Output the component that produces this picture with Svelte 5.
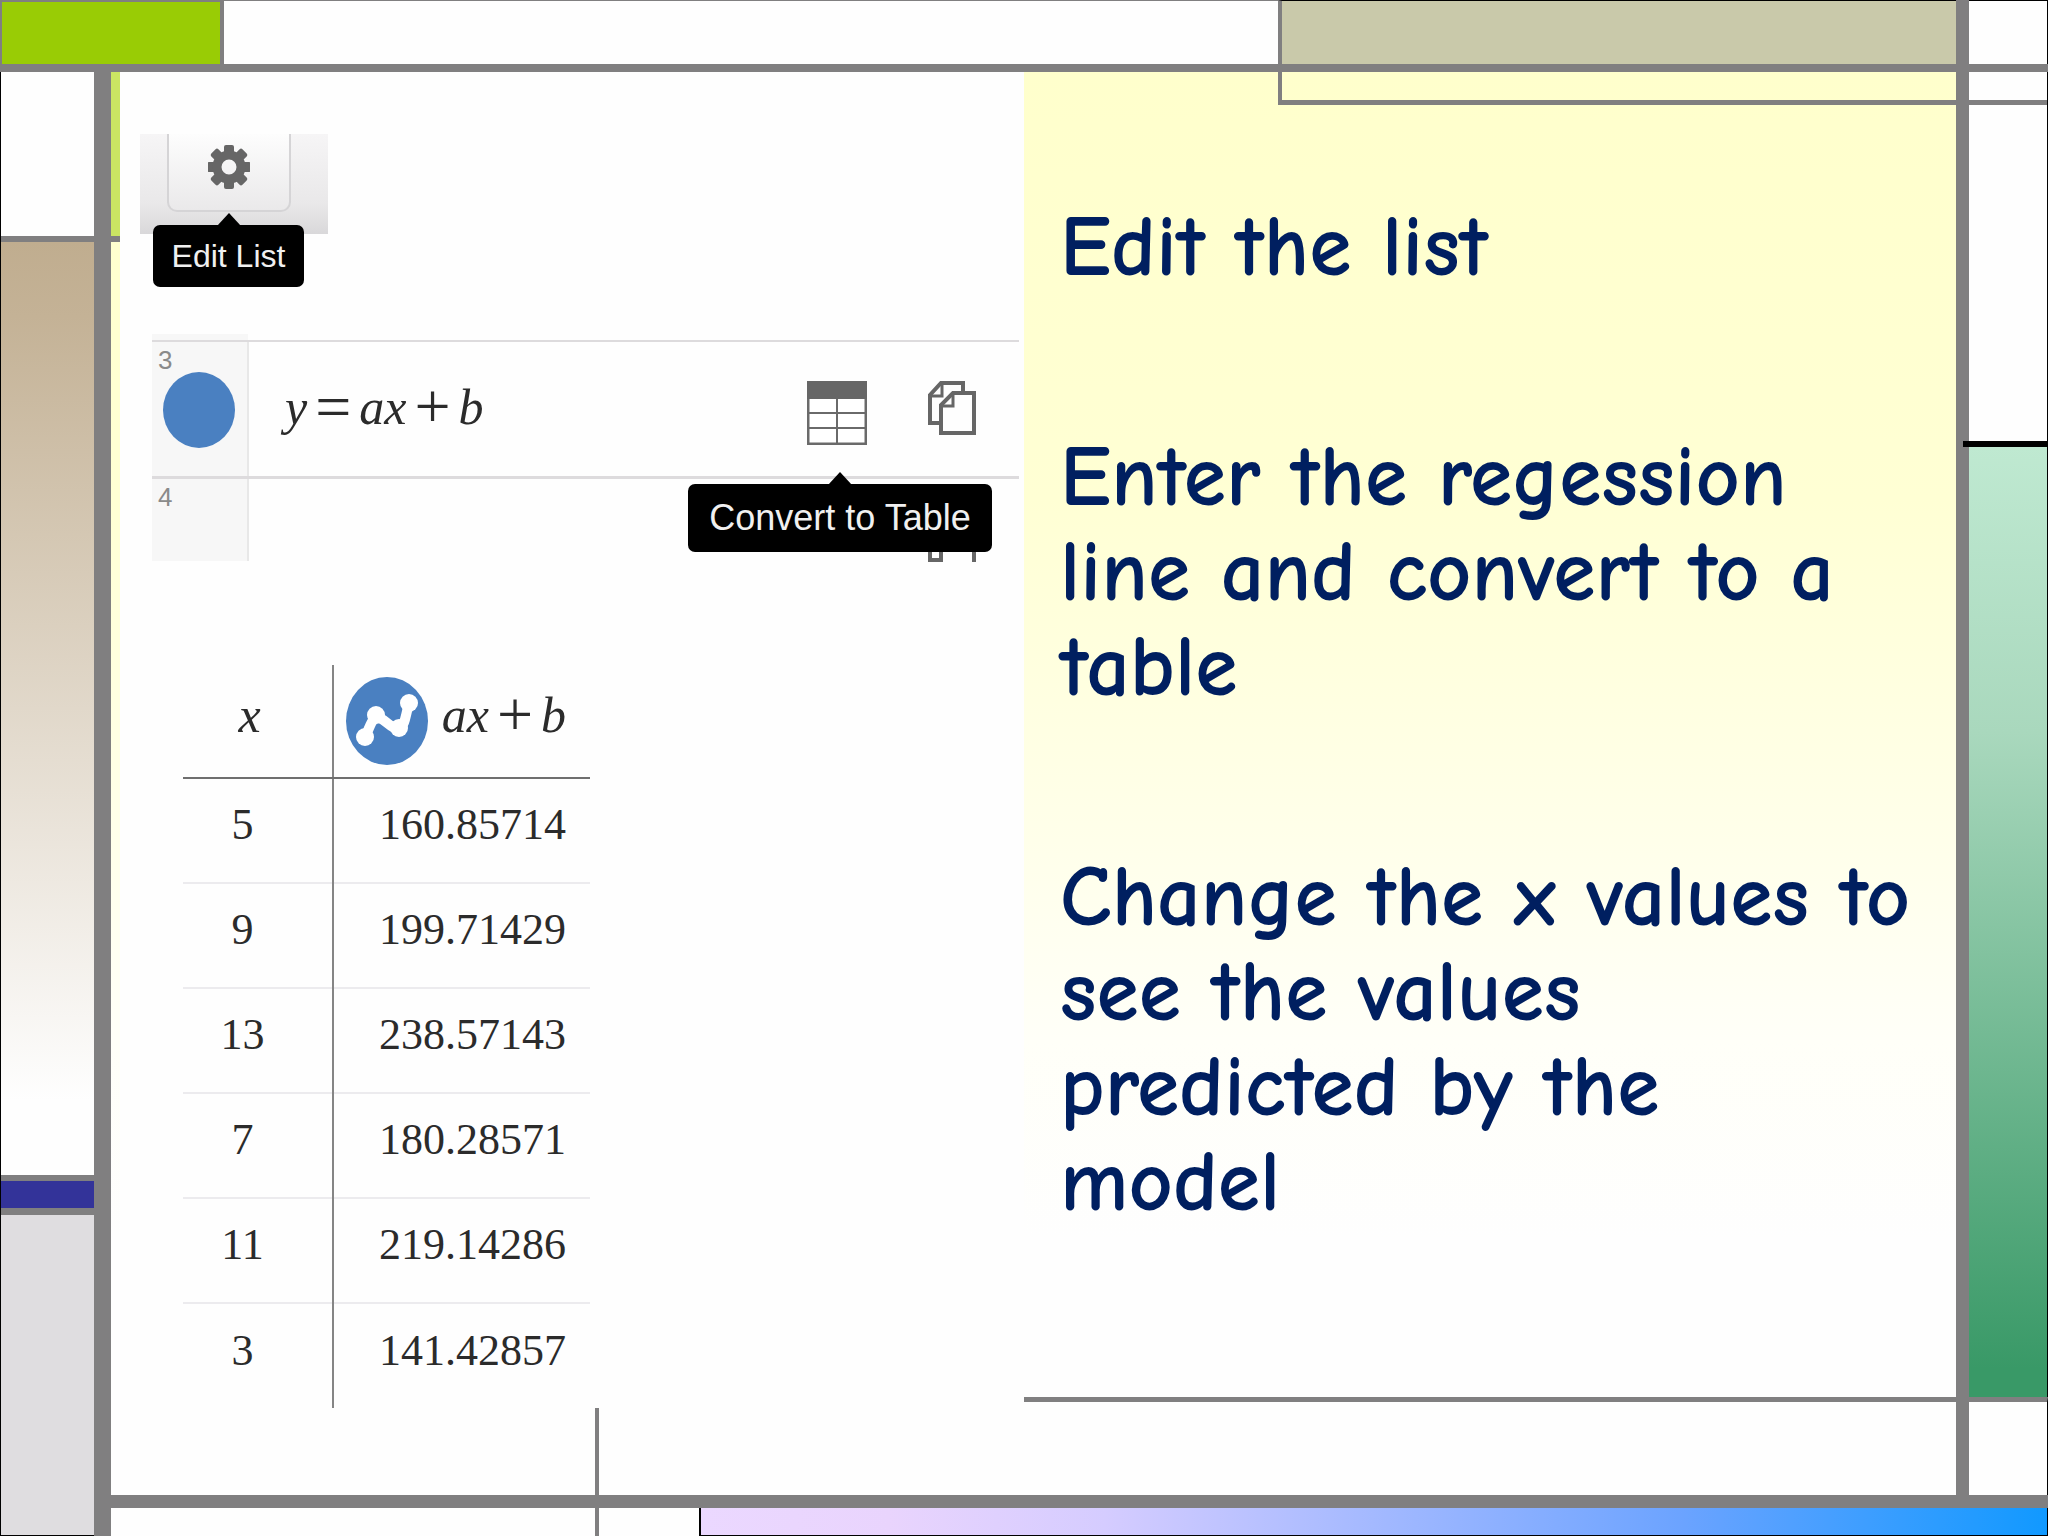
<script>
  const rows = [
    ['5', '160.85714'],
    ['9', '199.71429'],
    ['13', '238.57143'],
    ['7', '180.28571'],
    ['11', '219.14286'],
    ['3', '141.42857'],
  ];

  const steps = [
    ['Edit the list'],
    ['Enter the regession', 'line and convert to a', 'table'],
    ['Change the x values to', 'see the values', 'predicted by the', 'model'],
  ];

  const teeth = [0, 45, 90, 135, 180, 225, 270, 315];
</script>

{#snippet copyIcon()}
  <svg width="48" height="54" viewBox="0 0 48 54" fill="none" stroke="#666" stroke-width="4" aria-hidden="true">
    <path d="M11 42H2V14L13 2H35V11" />
    <path d="M2 15H14V3" stroke-width="3" />
    <path d="M25 12H46V52H13V24Z" />
    <path d="M13 25H25V12" stroke-width="3" />
  </svg>
{/snippet}

<div class="slide">
  <div class="top">
    <div class="lime"></div>
    <div class="blank"></div>
    <div class="khaki"></div>
  </div>
  <div class="top-right"></div>
  <div class="bar-top"></div>
  <div class="bar-left"></div>
  <div class="bar-right"></div>
  <div class="bar-bottom"></div>

  <div class="rail-left">
    <div class="pane"></div>
    <div class="tan"></div>
    <div class="indigo"></div>
    <div class="silver"></div>
  </div>

  <main>
    <div class="strip"><div class="strip-lime"></div></div>
    <section class="demo">
      <div class="toolbar">
        <button class="gear" aria-label="Edit List">
          <svg width="42" height="44" viewBox="-21 -22 42 44" aria-hidden="true">
            <g fill="#666">
              {#each teeth as angle}
                <rect x="-5" y="-22" width="10" height="12" rx="2" transform="rotate({angle})" />
              {/each}
            </g>
            <circle r="12" fill="none" stroke="#666" stroke-width="9" />
          </svg>
        </button>
        <div class="tip tip-edit" role="tooltip">Edit List</div>
      </div>

      <div class="expressions">
        <div class="expr">
          <div class="gutter">
            <span class="index">3</span>
            <button class="dot" aria-label="Toggle curve"></button>
          </div>
          <div class="formula"><i>y</i><b>=</b><i>ax</i><b>+</b><i>b</i></div>
          <div class="actions">
            <button aria-label="Convert to Table">
              <svg width="60" height="64" viewBox="0 0 60 64" aria-hidden="true">
                <rect x="1" y="1" width="58" height="62" fill="#fff" stroke="#6a6a6a" stroke-width="3" />
                <rect width="60" height="18" fill="#666" />
                <path d="M30 18V63M2 32H58M2 47H58" stroke="#6a6a6a" stroke-width="2" />
              </svg>
            </button>
            <button class="copy" aria-label="Duplicate">{@render copyIcon()}</button>
          </div>
          <div class="tip tip-table" role="tooltip">Convert to Table</div>
        </div>
        <div class="expr next">
          <div class="gutter"><span class="index">4</span></div>
          <div class="clip">{@render copyIcon()}</div>
        </div>
      </div>

      <table>
        <thead>
          <tr>
            <th class="xhead"><i>x</i></th>
            <th>
              <div class="head">
                <button class="plot" aria-label="Plot points">
                  <svg width="82" height="88" viewBox="0 0 82 88" aria-hidden="true">
                    <ellipse cx="41" cy="44" rx="41" ry="44" fill="#4a80c1" />
                    <path d="M19 61C25 46 27 39 34 41C42 45 46 53 54 51C60 46 59 39 63 27" fill="none" stroke="#fff" stroke-width="10" />
                    <g fill="#fff">
                      <circle cx="19" cy="60" r="9" />
                      <circle cx="30" cy="38" r="9" />
                      <circle cx="53" cy="51" r="9" />
                      <circle cx="63" cy="26" r="9" />
                    </g>
                  </svg>
                </button>
                <div class="formula"><i>ax</i><b>+</b><i>b</i></div>
              </div>
            </th>
          </tr>
        </thead>
        <tbody>
          {#each rows as [x, value]}
            <tr><td class="xval">{x}</td><td>{value}</td></tr>
          {/each}
        </tbody>
      </table>
      <div class="stem"></div>
    </section>

    <section class="notes">
      <div class="bracket"></div>
      <div class="steps">
        {#each steps as lines}
          <p>{#each lines as line}<span>{line} </span>{/each}</p>
        {/each}
      </div>
      <div class="base"></div>
    </section>
  </main>

  <div class="rail-right">
    <div class="r1"></div>
    <div class="r2"></div>
    <div class="r3"></div>
    <div class="green"></div>
    <div class="r4"></div>
  </div>

  <div class="bottom">
    <div class="b1"></div>
    <div class="b2"></div>
    <div class="sky"></div>
  </div>
</div>

<style>
  :global(body) { background: #fefefe; }
  * { box-sizing: border-box; }
  button { border: 0; padding: 0; background: none; display: block; cursor: pointer; }
  svg { display: block; }

  .slide {
    --line: #807f80;
    min-height: 100vh;
    display: grid;
    grid-template-columns: 94px 17px 1fr 13px 79px;
    grid-template-rows: 64px 8px 1fr 13px 28px;
    background: #fefefe;
  }
  .top {
    grid-area: 1 / 1 / 2 / 4;
    display: grid;
    grid-template-columns: 224px 1fr 678px;
  }
  .lime {
    background: #99cc05;
    border: 2px solid var(--line);
    border-width: 2px 4px 0 2px;
  }
  .blank { border-top: 1px solid var(--line); }
  .khaki { background: #c9c9aa; border-left: 4px solid var(--line); border-top: 1px solid #000; }
  .top-right { grid-area: 1 / 5; border-top: 1px solid #000; border-right: 1px solid #000; }
  .bar-top { grid-area: 2 / 1 / 3 / 6; background: var(--line); z-index: 1; }
  .bar-left { grid-area: 3 / 2 / 6 / 3; background: var(--line); }
  .bar-right { grid-area: 1 / 4 / 5 / 5; background: var(--line); }
  .bar-bottom { grid-area: 4 / 3 / 5 / 6; background: var(--line); }

  .rail-left {
    grid-area: 3 / 1 / 6 / 2;
    display: flex;
    flex-direction: column;
    border-left: 1px solid #000;
    border-bottom: 1px solid #000;
  }
  .pane { height: 170px; border-bottom: 6px solid var(--line); }
  .tan { flex: 1; background: linear-gradient(#c0ad8f, #c4b296 8%, #fefefe 92%); }
  .indigo { height: 40px; background: #333399; border: solid var(--line); border-width: 6px 0 7px; }
  .silver { height: 320px; background: #dfdde0; }

  main {
    grid-area: 3 / 3;
    display: grid;
    grid-template-columns: 9px 904fr 932fr;
    background: linear-gradient(#ffffcc, #ffffd4 30%, #ffffea 54%, #fffff8 68%, #fefefe 82%);
  }
  .strip-lime { height: 170px; background: #cbe563; border-bottom: 6px solid var(--line); }
  .demo {
    background: #fefefe;
    padding: 62px 0 0 20px;
    display: flex;
    flex-direction: column;
    align-items: flex-start;
  }

  .toolbar {
    position: relative;
    width: 188px;
    height: 100px;
    display: flex;
    justify-content: center;
    align-items: flex-start;
    background: linear-gradient(#f6f5f6, #e9e8e9 70%, #d9d8da);
  }
  .gear {
    width: 124px;
    height: 78px;
    margin-right: 10px;
    padding: 12px 0 22px;
    display: flex;
    justify-content: center;
    align-items: center;
    border: solid #d5d4d6;
    border-width: 0 2px 2px;
    border-radius: 0 0 10px 10px;
    background: linear-gradient(#fdfdfd, #eae9ea);
  }

  .tip {
    position: absolute;
    z-index: 2;
    background: #000;
    color: #f0f0f0;
    border-radius: 7px;
    font-family: 'Liberation Sans', Arial, sans-serif;
    text-align: center;
    white-space: nowrap;
  }
  .tip::before {
    content: '';
    position: absolute;
    left: 50%;
    top: -12px;
    margin-left: -12px;
    border: solid transparent;
    border-width: 0 12px 13px;
    border-bottom-color: #000;
  }
  .tip-edit { left: 13px; top: 91px; width: 151px; font-size: 32px; line-height: 62px; }
  .tip-table { right: 27px; top: 142px; width: 304px; font-size: 36px; line-height: 68px; }

  .expressions {
    align-self: stretch;
    margin: 100px 5px 0 12px;
    padding-top: 6px;
    background: linear-gradient(90deg, #f7f7f7 96px, transparent 96px);
  }
  .expr {
    position: relative;
    height: 136px;
    border-top: 2px solid #dddbdd;
    display: flex;
    align-items: center;
  }
  .gutter {
    align-self: stretch;
    width: 97px;
    padding: 4px 0 0 6px;
    border-right: 2px solid #e8e8e8;
    font-family: 'Liberation Sans', Arial, sans-serif;
    font-size: 26px;
    line-height: 28px;
    color: #8a8a8a;
  }
  .index { display: block; }
  .dot { width: 72px; height: 76px; margin: -2px 0 0 5px; border-radius: 50%; background: #4a80c1; }
  .formula {
    display: flex;
    align-items: center;
    gap: 8px;
    color: #2b2b2b;
    font-family: 'Liberation Serif', 'Times New Roman', serif;
    font-size: 50px;
    line-height: 60px;
  }
  .formula b { font-weight: 400; font-size: 64px; }
  .expr .formula { margin-left: 36px; padding-bottom: 4px; }
  .actions { margin-left: auto; margin-right: 43px; display: flex; align-items: flex-start; gap: 61px; padding-top: 8px; }
  .next { height: 85px; border-top-width: 3px; }
  .clip { align-self: flex-start; margin: 39px 43px 0 auto; height: 44px; overflow: hidden; }

  table {
    width: 407px;
    margin: 104px 0 0 43px;
    border-collapse: collapse;
    table-layout: fixed;
    color: #2b2b2b;
    font-family: 'Liberation Serif', 'Times New Roman', serif;
    font-size: 44px;
    line-height: 50px;
  }
  th, td { padding: 0 24px 11px 0; text-align: right; font-weight: 400; height: 105px; border-top: 2px solid #ecebee; }
  th { height: 113px; padding: 0 24px 0 0; border-top: 0; border-bottom: 2px solid #6f6f6f; }
  tr > :first-child { width: 150px; border-right: 2px solid #858585; }
  .xval { padding: 0 30px 11px 0; text-align: center; }
  .xhead { padding: 0 16px 12px 0; text-align: center; font-size: 50px; }
  .head { display: flex; align-items: center; justify-content: flex-end; gap: 14px; margin-left: -12px; }
  .head .formula { padding-bottom: 12px; }
  .stem { flex: 1; min-height: 20px; margin-left: 455px; border-left: 4px solid var(--line); }

  .notes { display: flex; flex-direction: column; }
  .bracket {
    height: 33px;
    margin-left: 254px;
    flex: none;
    border: solid var(--line);
    border-width: 0 0 5px 4px;
  }
  .steps {
    flex: 1;
    padding: 95px 0 0 36px;
    display: flex;
    flex-direction: column;
    gap: 135px;
    color: #001f60;
    font-family: 'Comic Sans MS', 'Comic Neue', 'Open Sans', sans-serif;
    font-size: 86px;
    font-weight: 700;
    line-height: 95px;
  }
  .steps p { margin: 0; }
  .steps span { display: block; white-space: nowrap; }
  .base { height: 98px; border-top: 5px solid var(--line); }

  .rail-right { grid-area: 3 / 5; display: flex; flex-direction: column; }
  .rail-right div { border-right: 1px solid #000; }
  .r1 { height: 28px; }
  .r2 { height: 5px; background: var(--line); }
  .r3 { height: 336px; }
  .green {
    flex: 1;
    margin-left: -6px;
    border-top: 6px solid #000;
    background: linear-gradient(90deg, var(--line) 6px, transparent 6px), linear-gradient(#bfe9d1, #a9d8bd 30%, #399967 97%);
  }
  .r4 { height: 98px; border-top: 5px solid var(--line); }

  .bottom { grid-area: 5 / 3 / 6 / 6; display: grid; grid-template-columns: 488px 100px 1fr; }
  .b1 { border-right: 4px solid var(--line); }
  .sky {
    border: solid #000;
    border-width: 0 1px 1px 2px;
    background: linear-gradient(90deg, #ebd8ff, #e9d4fd 14%, #d5ccff 30%, #6ba3ff 73%, #1199ff);
  }
</style>
